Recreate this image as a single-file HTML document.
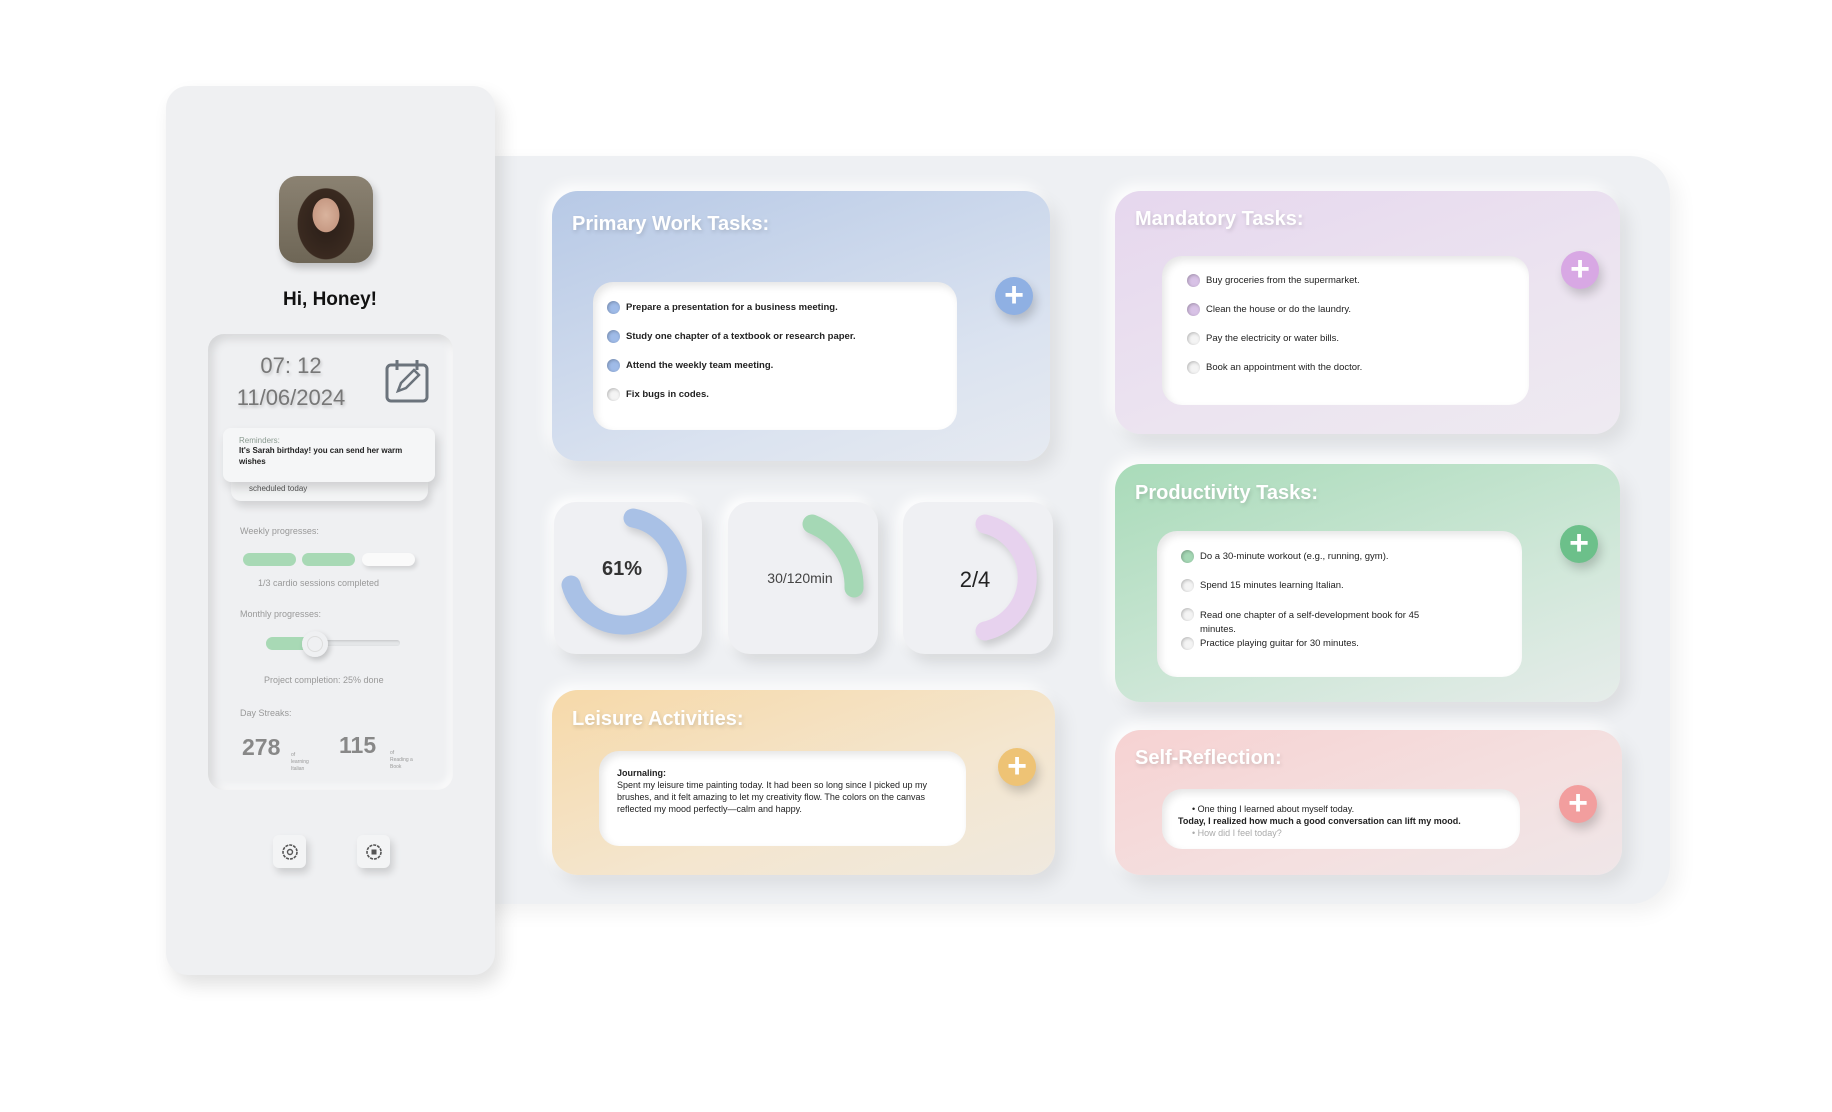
<!DOCTYPE html>
<html><head><meta charset="utf-8">
<style>
*{margin:0;padding:0;box-sizing:border-box}
body{width:1832px;height:1112px;background:#fff;font-family:"Liberation Sans",sans-serif;position:relative;overflow:hidden}
.a{position:absolute}
.main{left:470px;top:156px;width:1200px;height:748px;background:#eef0f3;border-radius:0 40px 40px 0;box-shadow:8px 8px 20px rgba(0,0,0,.06)}
.side{left:166px;top:86px;width:329px;height:889px;background:#eff0f2;border-radius:22px;box-shadow:6px 10px 18px rgba(0,0,0,.12),-4px -4px 10px rgba(255,255,255,.9)}
.card{border-radius:26px;box-shadow:8px 10px 18px rgba(0,0,0,.08),-6px -6px 14px rgba(255,255,255,.9)}
.title{color:#fff;font-weight:bold;font-size:20px;text-shadow:1px 2px 4px rgba(0,0,0,.15);position:absolute;left:20px;top:22px}
.inner{background:#fff;border-radius:20px;box-shadow:inset 3px 4px 8px rgba(0,0,0,.1)}
.plus{width:38px;height:38px;border-radius:50%;box-shadow:3px 6px 10px rgba(0,0,0,.18);color:#fff;font-size:34px;line-height:36px;text-align:center;font-weight:bold}
.row{position:absolute;font-size:9.5px;color:#222;font-weight:bold;white-space:nowrap}
.row i{position:absolute;left:-19px;top:-1px;width:13px;height:13px;border-radius:50%;box-shadow:inset 1px 1px 3px rgba(0,0,0,.25)}
.g{background:#eff0f3;border-radius:22px;box-shadow:6px 8px 14px rgba(0,0,0,.1),-5px -5px 12px rgba(255,255,255,.95)}
.small{font-size:9px;color:#999}
</style></head><body>
<div class="a main"></div>
<div class="a side"></div>
<div class="a" style="left:279px;top:176px;width:94px;height:87px;border-radius:18px;background:radial-gradient(ellipse 22px 28px at 50% 45%,#d9b39d 0,#c79a84 60%,transparent 62%),radial-gradient(ellipse 40px 50px at 50% 55%,#2a1e18 0,#3a2a20 70%,transparent 72%),linear-gradient(#8b8272,#6e6656);box-shadow:3px 5px 8px rgba(0,0,0,.2)"></div>
<div class="a" style="left:230px;top:289px;width:200px;text-align:center;font-weight:bold;font-size:19px;color:#111">Hi, Honey!</div>
<div class="a" style="left:208px;top:334px;width:245px;height:456px;border-radius:16px;background:#eff0f2;box-shadow:inset 4px 4px 10px rgba(0,0,0,.12),inset -3px -3px 8px rgba(255,255,255,.9)"></div>
<div class="a" style="left:231px;top:350px;width:120px;text-align:center;font-size:22px;color:#777;line-height:32px;text-shadow:1px 2px 3px rgba(0,0,0,.2)">07: 12<br>11/06/2024</div>
<svg class="a" style="left:382px;top:357px" width="50" height="48" viewBox="0 0 50 48"><rect x="5" y="8" width="40" height="36" rx="4" fill="none" stroke="#6b737c" stroke-width="3"/><path d="M15 3v10M35 3v10" stroke="#6b737c" stroke-width="3"/><path d="M16 34l3-8 13-13 5 5-13 13z" fill="none" stroke="#6b737c" stroke-width="2.5"/></svg>
<div class="a" style="left:231px;top:482px;width:197px;height:19px;background:#f3f4f5;border-radius:0 0 10px 10px;box-shadow:3px 6px 8px rgba(0,0,0,.12)"><span style="position:absolute;left:18px;top:2px;font-size:8px;color:#555">scheduled today</span></div>
<div class="a" style="left:223px;top:428px;width:212px;height:54px;background:#f5f6f7;border-radius:8px;box-shadow:3px 6px 10px rgba(0,0,0,.15);padding:8px 16px">
<div style="font-size:8px;color:#8a9a90">Reminders:</div><div style="font-size:8px;color:#222;font-weight:bold;line-height:11px">It's Sarah birthday! you can send her warm wishes</div></div>
<div class="a small" style="left:240px;top:526px">Weekly progresses:</div>
<div class="a" style="left:243px;top:553px;width:53px;height:13px;border-radius:7px;background:#a8d9b5"></div>
<div class="a" style="left:302px;top:553px;width:53px;height:13px;border-radius:7px;background:#a8d9b5"></div>
<div class="a" style="left:362px;top:553px;width:53px;height:13px;border-radius:7px;background:#fafafa;box-shadow:2px 3px 4px rgba(0,0,0,.12)"></div>
<div class="a small" style="left:258px;top:578px">1/3 cardio sessions completed</div>
<div class="a small" style="left:240px;top:609px">Monthly progresses:</div>
<div class="a" style="left:266px;top:640px;width:134px;height:6px;border-radius:3px;background:#e4e6e8;box-shadow:inset 1px 1px 2px rgba(0,0,0,.15)"></div>
<div class="a" style="left:266px;top:637px;width:52px;height:13px;border-radius:7px;background:#a8d9b5"></div>
<div class="a" style="left:302px;top:631px;width:26px;height:26px;border-radius:50%;background:#eff0f2;box-shadow:2px 3px 6px rgba(0,0,0,.2),inset 0 0 0 5px #eff0f2,inset 0 0 0 6px #ddd"></div>
<div class="a small" style="left:264px;top:675px">Project completion: 25% done</div>
<div class="a small" style="left:240px;top:708px">Day Streaks:</div>
<div class="a" style="left:242px;top:734px;font-size:23px;color:#888;font-weight:bold">278</div>
<div class="a" style="left:339px;top:732px;font-size:23px;color:#888;font-weight:bold">115</div>
<div class="a" style="left:291px;top:752px;font-size:5px;color:#999;line-height:7px">of<br>learning<br>Italian</div>
<div class="a" style="left:390px;top:750px;font-size:5px;color:#999;line-height:7px">of<br>Reading a<br>Book</div>
<div class="a" style="left:273px;top:835px;width:33px;height:33px;border-radius:6px;background:#f3f4f5;box-shadow:3px 5px 8px rgba(0,0,0,.15)"></div>
<div class="a" style="left:357px;top:835px;width:33px;height:33px;border-radius:6px;background:#f3f4f5;box-shadow:3px 5px 8px rgba(0,0,0,.15)"></div>
<svg class="a" style="left:280px;top:842px" width="20" height="20"><circle cx="10" cy="10" r="7" fill="none" stroke="#555" stroke-width="1.6" stroke-dasharray="3 1"/><circle cx="10" cy="10" r="2.5" fill="none" stroke="#555" stroke-width="1.4"/></svg>
<svg class="a" style="left:364px;top:842px" width="20" height="20"><circle cx="10" cy="10" r="7" fill="none" stroke="#555" stroke-width="1.6" stroke-dasharray="3 1"/><rect x="7.5" y="7.5" width="5" height="5" fill="#555"/></svg>

<div class="a card" style="left:552px;top:191px;width:498px;height:270px;background:linear-gradient(160deg,#b7c9e6,#dbe3f0 70%,#e6eaf1)">
<div class="title">Primary Work Tasks:</div>
<div class="a inner" style="left:41px;top:91px;width:364px;height:148px">
<div class="row" style="left:33px;top:20px"><i style="background:#9fbbe8"></i>Prepare a presentation for a business meeting.</div>
<div class="row" style="left:33px;top:49px"><i style="background:#9fbbe8"></i>Study one chapter of a textbook or research paper.</div>
<div class="row" style="left:33px;top:78px"><i style="background:#9fbbe8"></i>Attend the weekly team meeting.</div>
<div class="row" style="left:33px;top:107px"><i style="background:#f4f4f4"></i>Fix bugs in codes.</div>
</div>
<div class="a plus" style="left:443px;top:86px;background:#8fb0e3">+</div>
</div>
<div class="a g" style="left:554px;top:502px;width:148px;height:152px"></div>
<div class="a g" style="left:728px;top:502px;width:150px;height:152px"></div>
<div class="a g" style="left:903px;top:502px;width:150px;height:152px"></div>
<svg class="a" style="left:0;top:0;filter:drop-shadow(3px 5px 4px rgba(0,0,0,.15))" width="1832" height="1112">
<path d="M633 518 A54 54 0 1 1 571 585" fill="none" stroke="#a9c1e6" stroke-width="19" stroke-linecap="round"/>
<path d="M812 524 A67 67 0 0 1 854 588" fill="none" stroke="#a5d8b5" stroke-width="19" stroke-linecap="round"/>
<path d="M985 524 A55 55 0 0 1 985 631" fill="none" stroke="#e7d2ee" stroke-width="19" stroke-linecap="round"/>
</svg>
<div class="a" style="left:582px;top:558px;width:80px;text-align:center;font-size:20px;font-weight:bold;color:#333">61%</div>
<div class="a" style="left:760px;top:570px;width:80px;text-align:center;font-size:14px;color:#444">30/120min</div>
<div class="a" style="left:940px;top:567px;width:70px;text-align:center;font-size:22px;color:#222">2/4</div>
<div class="a card" style="left:552px;top:690px;width:503px;height:185px;background:linear-gradient(160deg,#f6d9a9,#f4e6cf 60%,#efe9df)">
<div class="title" style="top:18px">Leisure Activities:</div>
<div class="a inner" style="left:47px;top:61px;width:367px;height:95px;padding:16px 18px;font-size:9px;line-height:12px;color:#222"><b>Journaling:</b><br>Spent my leisure time painting today. It had been so long since I picked up my brushes, and it felt amazing to let my creativity flow. The colors on the canvas reflected my mood perfectly—calm and happy.</div>
<div class="a plus" style="left:446px;top:58px;background:#eec375">+</div>
</div>
<div class="a card" style="left:1115px;top:191px;width:505px;height:243px;background:linear-gradient(160deg,#e6d7ee,#ece4f0 60%,#eeeaf1)">
<div class="title" style="top:17px">Mandatory Tasks:</div>
<div class="a inner" style="left:47px;top:65px;width:367px;height:149px">
<div class="row" style="left:44px;top:19px;font-weight:normal"><i style="background:#d8c2e6"></i>Buy groceries from the supermarket.</div>
<div class="row" style="left:44px;top:48px;font-weight:normal"><i style="background:#d8c2e6"></i>Clean the house or do the laundry.</div>
<div class="row" style="left:44px;top:77px;font-weight:normal"><i style="background:#f4f4f4"></i>Pay the electricity or water bills.</div>
<div class="row" style="left:44px;top:106px;font-weight:normal"><i style="background:#f4f4f4"></i>Book an appointment with the doctor.</div>
</div>
<div class="a plus" style="left:446px;top:60px;background:#d8a8e4">+</div>
</div>
<div class="a card" style="left:1115px;top:464px;width:505px;height:238px;background:linear-gradient(160deg,#a9dbb9,#cfe7d8 60%,#e6ecea)">
<div class="title" style="top:18px">Productivity Tasks:</div>
<div class="a inner" style="left:42px;top:67px;width:365px;height:146px">
<div class="row" style="left:43px;top:20px;font-weight:normal"><i style="background:#a5d8b5"></i>Do a 30-minute workout (e.g., running, gym).</div>
<div class="row" style="left:43px;top:49px;font-weight:normal"><i style="background:#f4f4f4"></i>Spend 15 minutes learning Italian.</div>
<div class="row" style="left:43px;top:78px;font-weight:normal;line-height:14px"><i style="background:#f4f4f4"></i>Read one chapter of a self-development book for 45<br>minutes.</div>
<div class="row" style="left:43px;top:107px;font-weight:normal"><i style="background:#f4f4f4"></i>Practice playing guitar for 30 minutes.</div>
</div>
<div class="a plus" style="left:445px;top:61px;background:#6cc08a">+</div>
</div>
<div class="a card" style="left:1115px;top:730px;width:507px;height:145px;background:linear-gradient(160deg,#f6d2d2,#f4e0e0 60%,#efe6e8)">
<div class="title" style="top:17px">Self-Reflection:</div>
<div class="a inner" style="left:47px;top:59px;width:358px;height:60px;overflow:hidden;padding:14px 16px;font-size:9px;line-height:12px;color:#222">
<div style="padding-left:14px">• One thing I learned about myself today.</div>
<div style="font-weight:bold">Today, I realized how much a good conversation can lift my mood.</div>
<div style="padding-left:14px;color:#aaa">• How did I feel today?</div></div>
<div class="a plus" style="left:444px;top:55px;background:#f29e9e">+</div>
</div>
</body></html>
